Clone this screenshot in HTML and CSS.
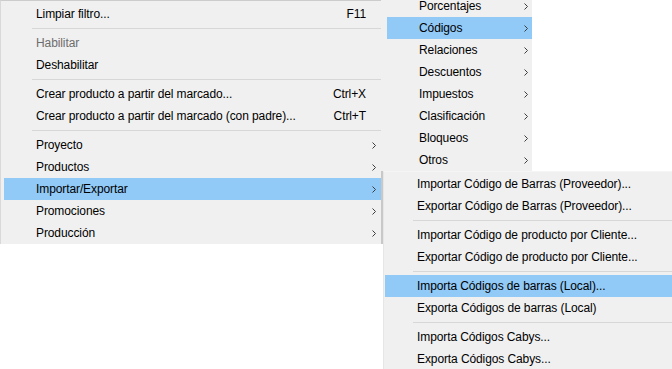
FILE: index.html
```html
<!DOCTYPE html>
<html lang="es">
<head>
<meta charset="utf-8">
<title>Menú</title>
<link rel="stylesheet" href="styles.css">
</head>
<body>
<div class="stage">
  <div class="menu main">
    <div class="item"><span class="label">Limpiar filtro...</span><span class="key">F11</span><span class="arr"></span></div>
    <div class="sep"></div>
    <div class="item disabled"><span class="label">Habilitar</span><span class="arr"></span></div>
    <div class="item"><span class="label">Deshabilitar</span><span class="arr"></span></div>
    <div class="sep"></div>
    <div class="item"><span class="label">Crear producto a partir del marcado...</span><span class="key">Ctrl+X</span><span class="arr"></span></div>
    <div class="item"><span class="label">Crear producto a partir del marcado (con padre)...</span><span class="key">Ctrl+T</span><span class="arr"></span></div>
    <div class="sep"></div>
    <div class="item"><span class="label">Proyecto</span><span class="arr"><svg width="4" height="7" viewBox="0 0 4 7"><path d="M0.5 0.5L3.5 3.5L0.5 6.5" fill="none" stroke="#3c3c3c" stroke-width="1"/></svg></span></div>
    <div class="item"><span class="label">Productos</span><span class="arr"><svg width="4" height="7" viewBox="0 0 4 7"><path d="M0.5 0.5L3.5 3.5L0.5 6.5" fill="none" stroke="#3c3c3c" stroke-width="1"/></svg></span></div>
    <div class="item active"><span class="label">Importar/Exportar</span><span class="arr"><svg width="4" height="7" viewBox="0 0 4 7"><path d="M0.5 0.5L3.5 3.5L0.5 6.5" fill="none" stroke="#3c3c3c" stroke-width="1"/></svg></span></div>
    <div class="item"><span class="label">Promociones</span><span class="arr"><svg width="4" height="7" viewBox="0 0 4 7"><path d="M0.5 0.5L3.5 3.5L0.5 6.5" fill="none" stroke="#3c3c3c" stroke-width="1"/></svg></span></div>
    <div class="item"><span class="label">Producción</span><span class="arr"><svg width="4" height="7" viewBox="0 0 4 7"><path d="M0.5 0.5L3.5 3.5L0.5 6.5" fill="none" stroke="#3c3c3c" stroke-width="1"/></svg></span></div>
  </div>

  <div class="menu sub1">
    <div class="item"><span class="label">Porcentajes</span><span class="arr"><svg width="4" height="7" viewBox="0 0 4 7"><path d="M0.5 0.5L3.5 3.5L0.5 6.5" fill="none" stroke="#3c3c3c" stroke-width="1"/></svg></span></div>
    <div class="item active"><span class="label">Códigos</span><span class="arr"><svg width="4" height="7" viewBox="0 0 4 7"><path d="M0.5 0.5L3.5 3.5L0.5 6.5" fill="none" stroke="#3c3c3c" stroke-width="1"/></svg></span></div>
    <div class="item"><span class="label">Relaciones</span><span class="arr"><svg width="4" height="7" viewBox="0 0 4 7"><path d="M0.5 0.5L3.5 3.5L0.5 6.5" fill="none" stroke="#3c3c3c" stroke-width="1"/></svg></span></div>
    <div class="item"><span class="label">Descuentos</span><span class="arr"><svg width="4" height="7" viewBox="0 0 4 7"><path d="M0.5 0.5L3.5 3.5L0.5 6.5" fill="none" stroke="#3c3c3c" stroke-width="1"/></svg></span></div>
    <div class="item"><span class="label">Impuestos</span><span class="arr"><svg width="4" height="7" viewBox="0 0 4 7"><path d="M0.5 0.5L3.5 3.5L0.5 6.5" fill="none" stroke="#3c3c3c" stroke-width="1"/></svg></span></div>
    <div class="item"><span class="label">Clasificación</span><span class="arr"><svg width="4" height="7" viewBox="0 0 4 7"><path d="M0.5 0.5L3.5 3.5L0.5 6.5" fill="none" stroke="#3c3c3c" stroke-width="1"/></svg></span></div>
    <div class="item"><span class="label">Bloqueos</span><span class="arr"><svg width="4" height="7" viewBox="0 0 4 7"><path d="M0.5 0.5L3.5 3.5L0.5 6.5" fill="none" stroke="#3c3c3c" stroke-width="1"/></svg></span></div>
    <div class="item"><span class="label">Otros</span><span class="arr"><svg width="4" height="7" viewBox="0 0 4 7"><path d="M0.5 0.5L3.5 3.5L0.5 6.5" fill="none" stroke="#3c3c3c" stroke-width="1"/></svg></span></div>
  </div>

  <div class="menu sub2">
    <div class="item"><span class="label">Importar Código de Barras (Proveedor)...</span></div>
    <div class="item"><span class="label">Exportar Código de Barras (Proveedor)...</span></div>
    <div class="sep"></div>
    <div class="item"><span class="label">Importar Código de producto por Cliente...</span></div>
    <div class="item"><span class="label">Exportar Código de producto por Cliente...</span></div>
    <div class="sep"></div>
    <div class="item active"><span class="label">Importa Códigos de barras (Local)...</span></div>
    <div class="item"><span class="label">Exporta Códigos de barras (Local)</span></div>
    <div class="sep"></div>
    <div class="item"><span class="label">Importa Códigos Cabys...</span></div>
    <div class="item"><span class="label">Exporta Códigos Cabys...</span></div>
  </div>
</div>
</body>
</html>
```

FILE: styles.css
```css
html, body {
  margin: 0;
  padding: 0;
  background: #ffffff;
  overflow: hidden;
}

body {
  font-family: "Liberation Sans", Arial, sans-serif;
  font-size: 12px;
  letter-spacing: -0.1px;
  color: #000000;
}

.stage {
  position: relative;
  width: 672px;
  height: 369px;
  overflow: hidden;
}

.menu {
  background: #f0f0f0;
  box-sizing: border-box;
  display: flex;
  flex-direction: column;
}

.item {
  display: flex;
  align-items: center;
  height: 22px;
  line-height: 22px;
  padding-left: 32px;
  white-space: nowrap;
}

.item.active {
  background: #91c9f7;
}

.item.disabled {
  color: #6d6d6d;
}

.label {
  flex: 1;
}

.key {
  text-align: right;
}

.arr {
  width: 10px;
  height: 22px;
  display: flex;
  align-items: center;
  justify-content: flex-end;
}

.sep {
  height: 7px;
  display: flex;
  align-items: center;
  margin-left: 28px;
}

.sep::before {
  content: "";
  flex: 1;
  height: 1px;
  background: #d7d7d7;
}

.main {
  width: 383px;
  border-top: 1px solid #cccccc;
  border-left: 1px solid #d9d9d9;
  border-right: 2px solid #c8c8c8;
  padding: 2px 0 0 3px;
}

.main .item {
  padding-right: 5px;
}

.sub1 {
  position: absolute;
  left: 381px;
  top: -8px;
  width: 151px;
  padding: 3px 0 0 6px;
}

.sub1 .item {
  padding-right: 4px;
}

.sub2 {
  position: absolute;
  left: 383px;
  top: 171px;
  width: 300px;
  height: 220px;
  border-top: 1px solid #f5f5f5;
  border-left: 1px solid #e6e6e6;
  padding: 1px 0 0 1px;
}
```
